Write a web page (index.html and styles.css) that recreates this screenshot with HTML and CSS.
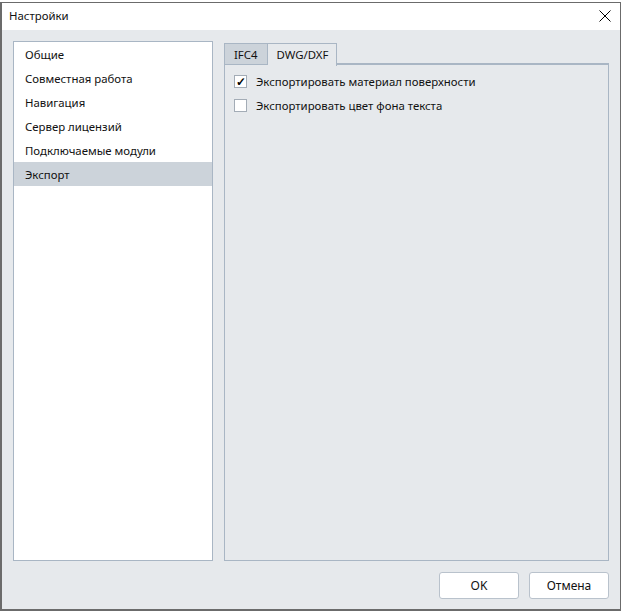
FILE: index.html
```html
<!DOCTYPE html>
<html lang="ru">
<head>
  <meta charset="UTF-8">
  <title>Настройки</title>
  <link rel="stylesheet" href="styles.css">
</head>
<body>
  <div class="window">
    <header class="titlebar">
      <span class="title">Настройки</span>
      <svg class="close" width="12" height="12" viewBox="0 0 12 12">
        <path d="M0.5 0.5 L11.5 11.5 M11.5 0.5 L0.5 11.5" stroke="#000" stroke-width="1" fill="none"/>
      </svg>
    </header>

    <main class="content">
      <div class="panes">
        <ul class="nav">
          <li>Общие</li>
          <li>Совместная работа</li>
          <li>Навигация</li>
          <li>Сервер лицензий</li>
          <li>Подключаемые модули</li>
          <li class="active">Экспорт</li>
        </ul>

        <section class="tabs">
          <div class="tab-row">
            <span class="tab">IFC4</span>
            <span class="tab current">DWG/DXF</span>
            <span class="tab-fill"></span>
          </div>
          <div class="tab-body">
            <label class="check"><span class="box">&#10003;</span>Экспортировать материал поверхности</label>
            <label class="check"><span class="box"></span>Экспортировать цвет фона текста</label>
          </div>
        </section>
      </div>

      <div class="buttons">
        <button>OK</button>
        <button>Отмена</button>
      </div>
    </main>
  </div>
</body>
</html>
```

FILE: styles.css
```css
:root {
  font-family: "Noto Sans", "Open Sans", sans-serif;
  font-size: 11.4px;
  color: #111;
}
body {
  margin: 0;
  background: #fff;
}
.window {
  margin-top: 2px;
  width: 621px;
  height: 609px;
  box-sizing: border-box;
  border: solid #6b6b6b;
  border-width: 1px 1px 2px 2px;
  display: flex;
  flex-direction: column;
  background: #e6e9ec;
}
.titlebar {
  height: 27px;
  background: #fff;
  display: flex;
  align-items: center;
  justify-content: space-between;
  padding: 0 9px 0 7px;
  flex-shrink: 0;
}
.title {
  margin-top: -2px;
}
.close {
  margin-top: -1px;
}
.content {
  flex: 1;
  display: flex;
  flex-direction: column;
  padding: 11px 11px 10px 11px;
  gap: 11px;
}
.panes {
  flex: 1;
  display: flex;
  gap: 11px;
}
.nav {
  list-style: none;
  margin: 0;
  padding: 0;
  width: 200px;
  box-sizing: border-box;
  background: #fff;
  border: 1px solid #a9b6c4;
}
.nav li {
  height: 24px;
  line-height: 26px;
  padding-left: 11px;
}
.nav li.active {
  background: #ccd3da;
}
.tabs {
  flex: 1;
  display: flex;
  flex-direction: column;
  padding-top: 2px;
}
.tab-row {
  display: flex;
  height: 21px;
}
.tab {
  padding: 0 9px;
  line-height: 21px;
  border: 1px solid #a9b6c4;
  border-bottom: none;
  background: #ccd3da;
}
.tab.current {
  background: #e6e9ec;
  border-left: none;
  padding: 0 8px 0 9px;
  height: 22px;
  position: relative;
  z-index: 1;
}
.tab-fill {
  flex: 1;
  border-bottom: 1px solid #a9b6c4;
}
.tab-body {
  flex: 1;
  border: 1px solid #a9b6c4;
  padding: 4px 9px;
  display: flex;
  flex-direction: column;
}
.check {
  display: flex;
  align-items: center;
  height: 24px;
  gap: 9px;
}
.box {
  width: 11px;
  height: 11px;
  border: 1px solid #a3acb6;
  background: #fff;
  font-size: 12px;
  font-weight: bold;
  line-height: 11px;
  text-align: center;
  color: #000;
}
.buttons {
  display: flex;
  justify-content: flex-end;
  gap: 10px;
}
button {
  width: 80px;
  height: 27px;
  font: inherit;
  font-size: 12px;
  color: #111;
  background: #fff;
  border: 1px solid #b9c2cc;
  border-radius: 3px;
}
```
